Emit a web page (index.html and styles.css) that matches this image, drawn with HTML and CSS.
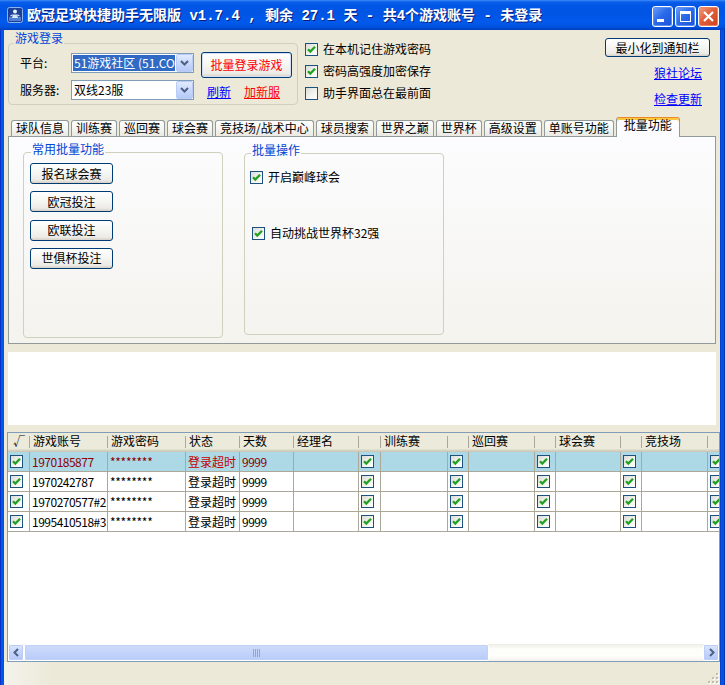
FILE: index.html
```html
<!DOCTYPE html>
<html lang="zh-CN">
<head>
<meta charset="utf-8">
<title>欧冠足球快捷助手无限版</title>
<link rel="stylesheet" href="styles.css">
</head>
<body>
<div class="window">
  <div class="titlebar">
    <svg class="app-icon" viewBox="0 0 16 16" width="16" height="16">
      <rect x="0.5" y="0.5" width="15" height="15" rx="2" fill="#1E3F96" stroke="#8DB2EE"/>
      <rect x="2" y="10" width="12" height="4" fill="#4F7FD0"/>
      <circle cx="8" cy="4.6" r="2" fill="#EAF2FF"/>
      <path d="M5 11 L6 7.5 L10 7.5 L11 11 Z" fill="#D6E6FF"/>
      <path d="M3.5 9 L5.8 7.8 M12.5 9 L10.2 7.8" stroke="#D6E6FF" stroke-width="1.2"/>
    </svg>
    <div class="title">欧冠足球快捷助手无限版 v1.7.4 , 剩余 27.1 天 - 共4个游戏账号 - 未登录</div>
    <div class="caption-btns">
      <div class="cbtn"><svg width="19" height="19" viewBox="0 0 19 19"><rect x="4" y="12" width="7" height="3" fill="#fff"/></svg></div>
      <div class="cbtn"><svg width="19" height="19" viewBox="0 0 19 19"><rect x="4.5" y="4.5" width="10" height="10" fill="none" stroke="#fff"/><rect x="4" y="4" width="11" height="3" fill="#fff"/></svg></div>
      <div class="cbtn close"><svg width="19" height="19" viewBox="0 0 19 19"><path d="M5 5 L14 14 M14 5 L5 14" stroke="#fff" stroke-width="2.2"/></svg></div>
    </div>
  </div>
  <div class="frame">
    <div class="border-l"></div>
    <div class="client">
      <div class="top">
        <div class="grp login">
          <div class="grp-title">游戏登录</div>
          <div class="login-grid">
            <div class="lbl">平台:</div>
            <div class="combo sel">
              <div class="combo-text">51游戏社区 (51.COM)</div>
              <div class="combo-btn"><svg width="9" height="6" viewBox="0 0 9 6"><path d="M1 1 L4.5 4.5 L8 1" stroke="#4D6185" stroke-width="2" fill="none"/></svg></div>
            </div>
            <button class="btn btn-login">批量登录游戏</button>
            <div class="lbl">服务器:</div>
            <div class="combo">
              <div class="combo-text">双线23服</div>
              <div class="combo-btn"><svg width="9" height="6" viewBox="0 0 9 6"><path d="M1 1 L4.5 4.5 L8 1" stroke="#4D6185" stroke-width="2" fill="none"/></svg></div>
            </div>
            <div class="links"><a class="lnk">刷新</a><a class="lnk red">加新服</a></div>
          </div>
        </div>
        <div class="checks">
          <div class="chk-row"><span class="cb on"></span><span>在本机记住游戏密码</span></div>
          <div class="chk-row"><span class="cb on"></span><span>密码高强度加密保存</span></div>
          <div class="chk-row"><span class="cb"></span><span>助手界面总在最前面</span></div>
        </div>
        <div class="right-col">
          <button class="btn btn-tray">最小化到通知栏</button>
          <a class="lnk link1">狼社论坛</a>
          <a class="lnk link2">检查更新</a>
        </div>
      </div>

      <div class="tabs">
        <div class="tab">球队信息</div>
        <div class="tab">训练赛</div>
        <div class="tab">巡回赛</div>
        <div class="tab">球会赛</div>
        <div class="tab">竞技场/战术中心</div>
        <div class="tab">球员搜索</div>
        <div class="tab">世界之巅</div>
        <div class="tab">世界杯</div>
        <div class="tab">高级设置</div>
        <div class="tab">单账号功能</div>
        <div class="tab active">批量功能</div>
      </div>

      <div class="panel">
        <div class="grp grp1">
          <div class="grp-title">常用批量功能</div>
          <div class="btn-stack">
            <button class="btn btn-small">报名球会赛</button>
            <button class="btn btn-small">欧冠投注</button>
            <button class="btn btn-small">欧联投注</button>
            <button class="btn btn-small">世俱杯投注</button>
          </div>
        </div>
        <div class="grp grp2">
          <div class="grp-title">批量操作</div>
          <div class="chk-row2 first"><span class="cb on"></span><span>开启巅峰球会</span></div>
          <div class="chk-row2 second"><span class="cb on"></span><span>自动挑战世界杯32强</span></div>
        </div>
      </div>

      <div class="log"></div>

      <div class="lv">
        <div class="lv-head">
          <div class="c h0">√</div>
          <div class="c">游戏账号</div>
          <div class="c">游戏密码</div>
          <div class="c">状态</div>
          <div class="c">天数</div>
          <div class="c">经理名</div>
          <div class="c"></div>
          <div class="c">训练赛</div>
          <div class="c"></div>
          <div class="c">巡回赛</div>
          <div class="c"></div>
          <div class="c">球会赛</div>
          <div class="c"></div>
          <div class="c">竞技场</div>
          <div class="c"></div>
        </div>
        <div class="lv-body">
          <div class="row selected">
            <div class="c k"><span class="cb on"></span></div>
            <div class="c num">1970185877</div>
            <div class="c pw">********</div>
            <div class="c st">登录超时</div>
            <div class="c num">9999</div>
            <div class="c"></div>
            <div class="c k"><span class="cb on"></span></div>
            <div class="c"></div>
            <div class="c k"><span class="cb on"></span></div>
            <div class="c"></div>
            <div class="c k"><span class="cb on"></span></div>
            <div class="c"></div>
            <div class="c k"><span class="cb on"></span></div>
            <div class="c"></div>
            <div class="c k"><span class="cb on"></span></div>
          </div>
          <div class="row">
            <div class="c k"><span class="cb on"></span></div>
            <div class="c num">1970242787</div>
            <div class="c pw">********</div>
            <div class="c">登录超时</div>
            <div class="c num">9999</div>
            <div class="c"></div>
            <div class="c k"><span class="cb on"></span></div>
            <div class="c"></div>
            <div class="c k"><span class="cb on"></span></div>
            <div class="c"></div>
            <div class="c k"><span class="cb on"></span></div>
            <div class="c"></div>
            <div class="c k"><span class="cb on"></span></div>
            <div class="c"></div>
            <div class="c k"><span class="cb on"></span></div>
          </div>
          <div class="row">
            <div class="c k"><span class="cb on"></span></div>
            <div class="c num">1970270577#2</div>
            <div class="c pw">********</div>
            <div class="c">登录超时</div>
            <div class="c num">9999</div>
            <div class="c"></div>
            <div class="c k"><span class="cb on"></span></div>
            <div class="c"></div>
            <div class="c k"><span class="cb on"></span></div>
            <div class="c"></div>
            <div class="c k"><span class="cb on"></span></div>
            <div class="c"></div>
            <div class="c k"><span class="cb on"></span></div>
            <div class="c"></div>
            <div class="c k"><span class="cb on"></span></div>
          </div>
          <div class="row">
            <div class="c k"><span class="cb on"></span></div>
            <div class="c num">1995410518#3</div>
            <div class="c pw">********</div>
            <div class="c">登录超时</div>
            <div class="c num">9999</div>
            <div class="c"></div>
            <div class="c k"><span class="cb on"></span></div>
            <div class="c"></div>
            <div class="c k"><span class="cb on"></span></div>
            <div class="c"></div>
            <div class="c k"><span class="cb on"></span></div>
            <div class="c"></div>
            <div class="c k"><span class="cb on"></span></div>
            <div class="c"></div>
            <div class="c k"><span class="cb on"></span></div>
          </div>
        </div>
        <div class="hscroll">
          <div class="sb-btn"><svg width="9" height="9" viewBox="0 0 9 9"><path d="M6 1 L2.5 4.5 L6 8" stroke="#4D6185" stroke-width="2" fill="none"/></svg></div>
          <div class="thumb"><svg width="8" height="8" viewBox="0 0 8 8"><path d="M0.5 0 V8 M2.5 0 V8 M4.5 0 V8 M6.5 0 V8" stroke="#8CA6E0" stroke-width="1"/></svg></div>
          <div class="track"></div>
          <div class="sb-btn"><svg width="9" height="9" viewBox="0 0 9 9"><path d="M3 1 L6.5 4.5 L3 8" stroke="#4D6185" stroke-width="2" fill="none"/></svg></div>
        </div>
      </div>

      <div class="status">
        <svg class="grip" width="12" height="12" viewBox="0 0 12 12">
          <g fill="#FFFFFF"><rect x="10" y="2" width="2" height="2"/><rect x="6" y="6" width="2" height="2"/><rect x="10" y="6" width="2" height="2"/><rect x="2" y="10" width="2" height="2"/><rect x="6" y="10" width="2" height="2"/><rect x="10" y="10" width="2" height="2"/></g>
          <g fill="#C1BDA9"><rect x="9" y="1" width="2" height="2"/><rect x="5" y="5" width="2" height="2"/><rect x="9" y="5" width="2" height="2"/><rect x="1" y="9" width="2" height="2"/><rect x="5" y="9" width="2" height="2"/><rect x="9" y="9" width="2" height="2"/></g>
        </svg>
      </div>
    </div>
    <div class="border-r"></div>
  </div>
</div>
</body>
</html>
```

FILE: styles.css
```css
* { box-sizing: border-box; }
html, body { margin: 0; padding: 0; }
body {
  width: 725px;
  height: 685px;
  overflow: hidden;
  font-family: "Noto Sans CJK SC", "Noto Sans", sans-serif;
  font-size: 12px;
  line-height: 14px;
  color: #000;
  background: #ECE9D8;
}

.window { width: 725px; height: 685px; display: flex; flex-direction: column; }

/* ---------- title bar ---------- */
.titlebar {
  height: 30px;
  flex: none;
  display: flex;
  align-items: center;
  padding: 0 6px 0 7px;
  background: linear-gradient(#3D8CF5 0, #0A5EEA 2px, #0056E6 5px, #0055E5 14px, #005AEC 22px, #0051DE 27px, #003DBF 30px);
}
.app-icon { flex: none; margin-right: 4px; }
.title {
  color: #fff;
  font-family: "Liberation Mono", "Noto Sans CJK SC", monospace;
  font-weight: bold;
  font-size: 14px;
  line-height: 16px;
  white-space: nowrap;
  text-shadow: 1px 1px 0 #0A1E7A;
  margin-top: 1px;
}
.caption-btns { margin-left: auto; display: flex; gap: 2px; margin-top: 2px; }
.cbtn {
  width: 21px;
  height: 21px;
  border: 1px solid #fff;
  border-radius: 3px;
  background: linear-gradient(135deg, #6FA0F8 0%, #2B6BEB 45%, #1B52D6 100%);
  box-shadow: inset 0 0 0 1px #5A8EF2;
}
.cbtn svg { display: block; }
.cbtn.close {
  background: linear-gradient(135deg, #F0A183 0%, #E0603A 45%, #C7401B 100%);
  box-shadow: inset 0 0 0 1px #EC8464;
}

/* ---------- frame ---------- */
.frame { flex: 1; display: flex; min-height: 0; }
.border-l { width: 4px; flex: none; background: linear-gradient(to right, #0832C6 0 1px, #0058EE 1px 3px, #0A4FD8 3px); }
.border-r { width: 5px; flex: none; background: linear-gradient(to right, #0A3FC8 0 1px, #0055E5 1px 4px, #0636B8 4px); }
.client {
  flex: 1;
  min-width: 0;
  display: flex;
  flex-direction: column;
  overflow: hidden;
  background: #ECE9D8;
}

/* ---------- common controls ---------- */
.grp { border: 1px solid #D0D0BF; border-radius: 4px; flex: none; }
.grp-title {
  width: fit-content;
  line-height: 14px;
  padding: 0 1px;
  color: #0046D5;
  background: #ECE9D8;
}
.btn {
  display: flex;
  align-items: center;
  justify-content: center;
  padding: 0;
  margin: 0;
  font: inherit;
  line-height: 14px;
  color: #000;
  border: 1px solid #003C74;
  border-radius: 3px;
  background: linear-gradient(#FFFFFF 0%, #F6F6F3 45%, #ECEBE6 85%, #D6D0C5 100%);
  white-space: nowrap;
}
.lnk { color: #0000FF; text-decoration: underline; white-space: nowrap; }
.lnk.red { color: #FF0000; }

.cb {
  display: block;
  width: 13px;
  height: 13px;
  flex: none;
  border: 1px solid #1C5180;
  background: linear-gradient(135deg, #DCDCD7 0%, #F4F4F0 60%, #FFFFFF 100%);
}
.cb.on {
  background:
    url("data:image/svg+xml,%3Csvg xmlns='http://www.w3.org/2000/svg' viewBox='0 0 11 11'%3E%3Cpath d='M2 5.2l2.3 2.3L9 2.8' fill='none' stroke='%2321A121' stroke-width='2.3'/%3E%3C/svg%3E") center / 11px 11px no-repeat,
    linear-gradient(135deg, #DCDCD7 0%, #F4F4F0 60%, #FFFFFF 100%);
}

/* ---------- top area ---------- */
.top { height: 86px; flex: none; display: flex; align-items: flex-start; }
.login { margin: 13px 0 0 4px; width: 290px; height: 62px; }
.login .grp-title { margin: -13px 0 0 5px; }
.login-grid {
  display: grid;
  grid-template-columns: 51px 123px 7px 91px;
  grid-template-rows: 20px 20px;
  row-gap: 7px;
  margin: 8px 0 0 11px;
}
.lbl { grid-column: 1; line-height: 20px; white-space: nowrap; }
.combo {
  grid-column: 2;
  display: flex;
  height: 20px;
  border: 1px solid #7F9DB9;
  background: #fff;
}
.combo-text {
  flex: 1;
  min-width: 0;
  margin: 1px;
  padding-left: 1px;
  line-height: 16px;
  overflow: hidden;
  white-space: nowrap;
}
.combo.sel .combo-text { background: #316AC5; color: #fff; }
.combo-btn {
  width: 17px;
  flex: none;
  display: flex;
  align-items: center;
  justify-content: center;
  border: 1px solid #B9CCF8;
  border-radius: 2px;
  background: linear-gradient(#E2EAFE 0%, #C9D8FC 50%, #B6CAF6 100%);
}
.btn-login {
  grid-column: 4;
  grid-row: 1;
  height: 26px;
  margin-top: -1px;
  color: #FF0000;
  box-shadow: inset 0 0 0 1px #D2DEF8;
}
.links {
  grid-column: 4;
  grid-row: 2;
  display: flex;
  gap: 13px;
  padding: 5px 0 0 6px;
}

.checks { margin: 8px 0 0 7px; display: flex; flex-direction: column; }
.chk-row { height: 22px; display: flex; align-items: center; gap: 5px; white-space: nowrap; }

.right-col {
  margin: 8px 10px 0 auto;
  display: flex;
  flex-direction: column;
  align-items: flex-end;
}
.btn-tray { width: 105px; height: 19px; }
.link1 { margin: 9px 8px 0 0; }
.link2 { margin: 12px 8px 0 0; }

/* ---------- tabs ---------- */
.tabs {
  height: 20px;
  flex: none;
  display: flex;
  align-items: flex-end;
  padding-left: 7px;
}
.tab {
  height: 16px;
  line-height: 14px;
  padding: 0 4px;
  margin-right: 2px;
  border: 1px solid #919B9C;
  border-bottom: none;
  border-radius: 3px 3px 0 0;
  background: linear-gradient(#FFFFFF 0%, #F5F5F2 50%, #EAE9E3 100%);
  white-space: nowrap;
}
.tab.active {
  position: relative;
  z-index: 2;
  height: 20px;
  margin-bottom: -1px;
  padding: 0 7px;
  border-top: 1px solid #E68B2C;
  background: #FCFCFE;
  box-shadow: inset 0 2px 0 #FFC73C;
}

/* ---------- panel ---------- */
.panel {
  height: 208px;
  flex: none;
  margin: 0 4px;
  border: 1px solid #919B9C;
  background: linear-gradient(#FCFCFE, #F4F3EE);
  display: flex;
  align-items: flex-start;
  padding-left: 14px;
}
.panel .grp-title { background: #FBFBFB; }
.grp1 { margin-top: 15px; width: 200px; height: 186px; }
.grp1 .grp-title { margin: -11px 0 0 7px; }
.btn-stack { display: flex; flex-direction: column; gap: 7.33px; margin: 7px 0 0 6px; }
.btn-small { width: 83px; height: 21px; }
.grp2 { margin: 16px 0 0 21px; width: 200px; height: 182px; }
.grp2 .grp-title { margin: -11px 0 0 6px; }
.chk-row2 { height: 14px; display: flex; align-items: center; gap: 5px; white-space: nowrap; }
.chk-row2.first { margin: 13px 0 0 5px; }
.chk-row2.second { margin: 42px 0 0 7px; }

/* ---------- log ---------- */
.log { height: 73px; flex: none; margin: 8px 4px 0; background: #FFFFFF; }

/* ---------- list view ---------- */
.lv {
  height: 230px;
  flex: none;
  margin: 7px 0 0 3px;
  border: 1px solid #7F9DB9;
  background: #FFFFFF;
  display: flex;
  flex-direction: column;
}
.lv-head {
  height: 19px;
  flex: none;
  display: flex;
  white-space: nowrap;
  background: linear-gradient(#EBEADB 0 16px, #E2DECD 16px 17px, #D6D2C2 17px 18px, #CBC7B8 18px);
}
.lv-body { flex: 1; overflow: hidden; }
.row { display: flex; height: 20px; border-bottom: 1px solid #ACA899; }
.row.selected { background: #ADD8E6; color: #8E0000; }
.row.selected .st { color: #C00000; }
.c {
  flex: none;
  border-right: 1px solid #ACA899;
  padding-left: 2px;
  line-height: 19px;
  overflow: hidden;
  white-space: nowrap;
}
.lv-head .c {
  border-right: none;
  padding-left: 3px;
  line-height: 16px;
  background: linear-gradient(#ACA899, #ACA899) right 0 top 3px / 1px 12px no-repeat;
}
.lv-head .h0 { padding-left: 5px; }
.c:nth-child(1) { width: 22px; }
.c:nth-child(2) { width: 78px; }
.c:nth-child(3) { width: 78px; }
.c:nth-child(4) { width: 54px; }
.c:nth-child(5) { width: 54px; }
.c:nth-child(6) { width: 65px; }
.c:nth-child(7) { width: 22px; }
.c:nth-child(8) { width: 67px; }
.c:nth-child(9) { width: 21px; }
.c:nth-child(10) { width: 66px; }
.c:nth-child(11) { width: 21px; }
.c:nth-child(12) { width: 65px; }
.c:nth-child(13) { width: 21px; }
.c:nth-child(14) { width: 66px; }
.c:nth-child(15) { width: 21px; }
.c.k { display: flex; align-items: center; padding-left: 1.5px; }
.c.num { letter-spacing: -0.5px; }
.c.pw { letter-spacing: -0.3px; }

.hscroll {
  height: 17px;
  flex: none;
  display: flex;
  background: linear-gradient(#EEEDE5, #FDFDFA 30%, #FEFEFB 70%, #F3F1EC);
}
.sb-btn {
  width: 16px;
  flex: none;
  display: flex;
  align-items: center;
  justify-content: center;
  border: 1px solid #FFFFFF;
  border-radius: 2px;
  background: linear-gradient(#DCE6FD, #C4D5FC 50%, #B5C8F7);
  box-shadow: inset 0 0 0 1px #BCCEF8;
}
.thumb {
  width: 465px;
  flex: none;
  display: flex;
  align-items: center;
  justify-content: center;
  border: 1px solid #FFFFFF;
  border-radius: 2px;
  background: linear-gradient(#CEDCFC, #C3D4FB 50%, #B8CCF8);
  box-shadow: inset 0 0 0 1px #C0D1F8;
}
.track { flex: 1; }

/* ---------- status ---------- */
.status {
  flex: 1;
  display: flex;
  justify-content: flex-end;
  align-items: flex-end;
  padding: 0 1px 1px 0;
  background: linear-gradient(to right, #F4F3EC 0, #ECE9D8 50px);
}
.grip { display: block; }
```
